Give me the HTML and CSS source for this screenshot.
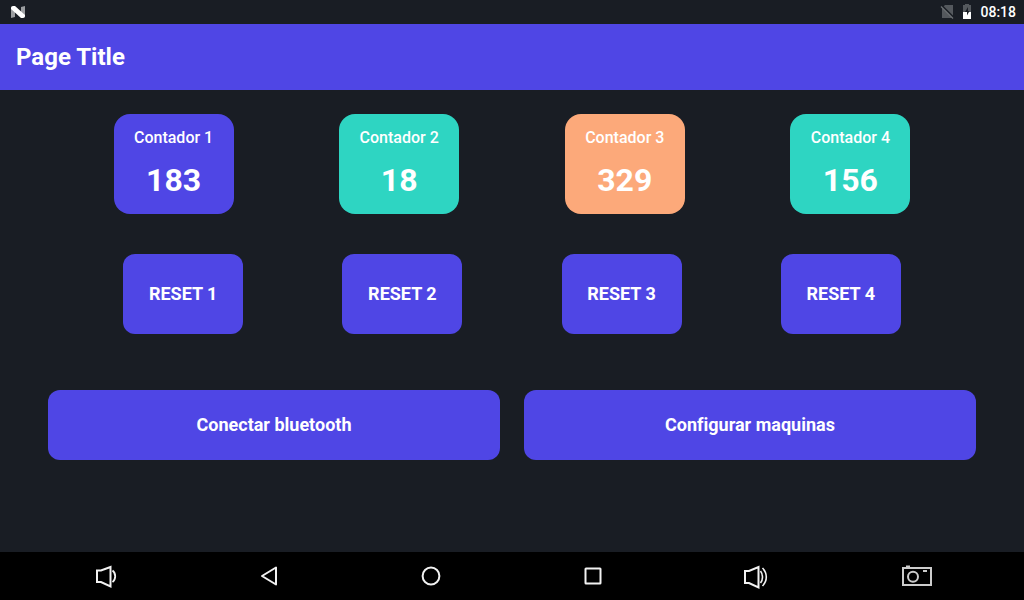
FILE: index.html
```html
<!DOCTYPE html>
<html lang="pt">
<head>
<meta charset="utf-8">
<meta name="viewport" content="width=device-width, initial-scale=1">
<title>Page Title</title>
<link rel="stylesheet" href="styles.css">
</head>
<body>
<div class="status">
  <svg class="status-logo" width="16" height="14" viewBox="0 0 16 14" aria-hidden="true">
    <path d="M1 2l4 3v7l-4 1zM11 2l4-1v11l-4-2z" fill="#9b9da0"/>
    <path d="M1 3Q1 1 3 1h2l10 9v1q0 2-2 2h-2L1 4z" fill="#fff"/>
  </svg>
  <div class="status-icons">
    <svg width="14" height="16" viewBox="0 0 14 16" aria-hidden="true">
      <path d="M5 1h8v13H2V4z" fill="#54585d"/>
      <path d="M1 1l13 13" stroke="#191d24" stroke-width="2"/>
      <path d="M1 2.500l12 12" stroke="#6b6f73" stroke-width="1.200"/>
    </svg>
    <svg width="10" height="16" viewBox="0 0 10 16" aria-hidden="true">
      <path d="M3 0h4v1h2v7H1V1h2z" fill="#54585d"/>
      <path d="M1 8h8v7H1z" fill="#fff"/>
      <path d="M6 3L3 8h2v3.500L7.500 7H6z" fill="#191d24"/>
    </svg>
    <time class="clock">08:18</time>
  </div>
</div>
<header class="appbar"><h1 class="title">Page Title</h1></header>
<main class="content">
  <section class="counters">
    <div class="counter"><span class="label">Contador 1</span><span class="value">183</span></div>
    <div class="counter teal"><span class="label">Contador 2</span><span class="value">18</span></div>
    <div class="counter orange"><span class="label">Contador 3</span><span class="value">329</span></div>
    <div class="counter teal"><span class="label">Contador 4</span><span class="value">156</span></div>
  </section>
  <section class="resets">
    <button class="button reset" type="button">RESET 1</button>
    <button class="button reset" type="button">RESET 2</button>
    <button class="button reset" type="button">RESET 3</button>
    <button class="button reset" type="button">RESET 4</button>
  </section>
  <section class="actions">
    <button class="button action" type="button">Conectar bluetooth</button>
    <button class="button action" type="button">Configurar maquinas</button>
  </section>
</main>
<nav class="navbar">
  <button class="nav" type="button" aria-label="Volume down">
    <svg class="nav-icon" viewBox="0 0 32 32"><path d="M6 10.500h4L19.500 7v19.500L10 22H6z"/><path d="M21.500 10.500q2.700 2 2.700 5.800t-2.700 5.800" stroke-width="1.800"/></svg>
  </button>
  <button class="nav" type="button" aria-label="Back">
    <svg class="nav-icon" viewBox="0 0 32 32"><path d="M9 16l14-8.500v17z" stroke-linejoin="round"/></svg>
  </button>
  <button class="nav" type="button" aria-label="Home">
    <svg class="nav-icon" viewBox="0 0 32 32"><circle cx="16" cy="16" r="8.400"/></svg>
  </button>
  <button class="nav" type="button" aria-label="Recent apps">
    <svg class="nav-icon" viewBox="0 0 32 32"><rect x="8.500" y="8.500" width="15" height="15" rx=".5"/></svg>
  </button>
  <button class="nav" type="button" aria-label="Volume up">
    <svg class="nav-icon" viewBox="0 0 32 32"><path d="M6 11h4l9.500-4v20.500L10 23H6z"/><path d="M21.500 11q2 2.500 2 6t-2 6M23.500 8q3.800 4 3.800 9t-3.800 9" stroke-width="1.600"/></svg>
  </button>
  <button class="nav" type="button" aria-label="Screenshot">
    <svg class="nav-icon camera" viewBox="0 0 32 32"><path d="M2 8h28v17H2z"/><circle cx="12" cy="16.700" r="5"/><path d="M22 11h4M5 6.500h4"/></svg>
  </button>
</nav>
</body>
</html>
```

FILE: styles.css
```css
* { box-sizing: border-box; }

body {
  margin: 0;
  min-height: 100vh;
  display: flex;
  flex-direction: column;
  background: #191d24;
  color: #fff;
  font-family: Roboto, "Noto Sans", sans-serif;
  font-variant-ligatures: none;
}

.status {
  height: 24px;
  padding: 0 8px 0 10px;
  display: flex;
  align-items: center;
  justify-content: space-between;
}

.status-icons {
  display: flex;
  align-items: center;
  gap: 8px;
}

.clock {
  font-size: 14px;
  font-weight: 500;
  line-height: 24px;
}

.appbar {
  padding: 16px;
  background: #4f46e5;
}

.title {
  margin: 0;
  font-size: 24px;
  font-weight: 700;
  line-height: 34px;
}

.content {
  flex: 1;
  display: flex;
  flex-direction: column;
  padding: 24px 0;
}

.counters,
.resets {
  display: flex;
  justify-content: space-evenly;
}

.counters { padding: 0 8px; }

.resets { padding: 40px 24px 56px; }

.counter {
  width: 120px;
  height: 100px;
  padding-top: 12px;
  display: flex;
  flex-direction: column;
  align-items: center;
  gap: 12px;
  border-radius: 16px;
  background: #4f46e5;
}

.teal { background: #2ed5c2; }

.orange { background: #fca97a; }

.label {
  font-size: 16px;
  font-weight: 500;
  line-height: 24px;
}

.value {
  font-size: 32px;
  font-weight: 700;
  line-height: 36px;
}

.button {
  padding: 0 0 2px;
  border: 0;
  border-radius: 12px;
  background: #4f46e5;
  color: #fff;
  font-family: inherit;
  font-size: 18px;
  font-weight: 700;
  font-variant-ligatures: inherit;
  cursor: pointer;
}

.reset {
  width: 120px;
  height: 80px;
}

.actions {
  display: flex;
  gap: 24px;
  padding: 0 48px;
}

.action {
  flex: 1;
  height: 70px;
}

.navbar {
  height: 48px;
  padding: 0 26px;
  display: flex;
  background: #000;
}

.nav {
  flex: 1;
  padding: 0;
  display: flex;
  align-items: center;
  justify-content: center;
  border: 0;
  background: none;
  cursor: pointer;
}

.nav-icon {
  width: 32px;
  height: 32px;
  fill: none;
  stroke: #f2f2f2;
  stroke-width: 2;
}

.camera { stroke: #ccc; }
```
